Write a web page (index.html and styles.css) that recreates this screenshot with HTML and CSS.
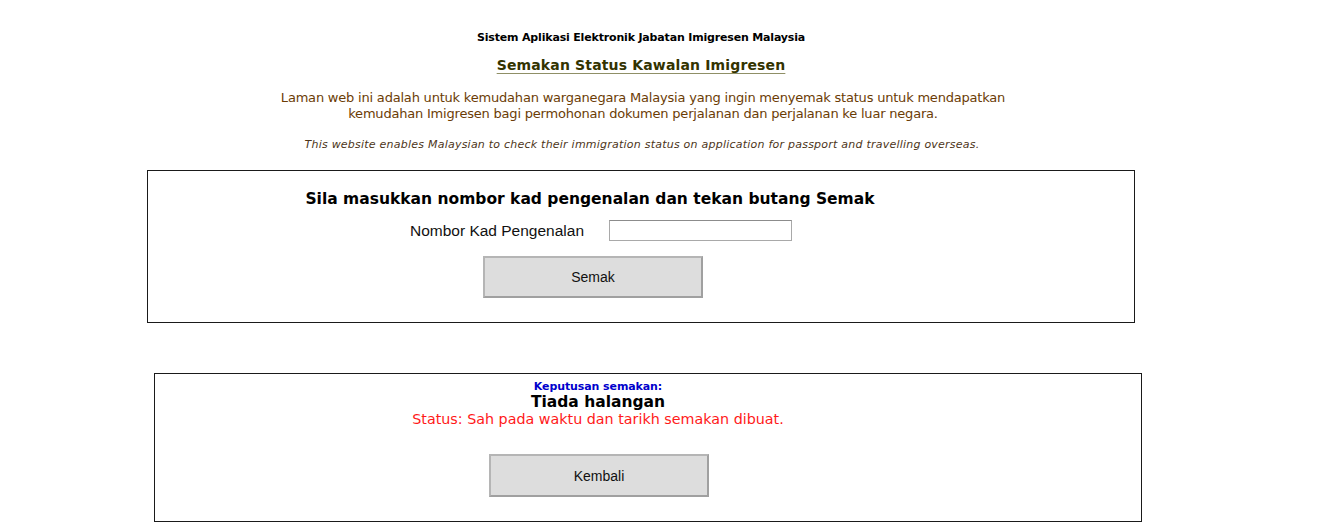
FILE: index.html
```html
<!DOCTYPE html>
<html lang="ms">
<head>
<meta charset="utf-8">
<title>Semakan Status Kawalan Imigresen</title>
<link rel="stylesheet" href="styles.css">
</head>
<body>
<div class="page">
  <div class="system-title">Sistem Aplikasi Elektronik Jabatan Imigresen Malaysia</div>
  <div class="page-title">Semakan Status Kawalan Imigresen</div>
  <p class="intro">Laman web ini adalah untuk kemudahan warganegara Malaysia yang ingin menyemak status untuk mendapatkan<br>kemudahan Imigresen bagi permohonan dokumen perjalanan dan perjalanan ke luar negara.</p>
  <p class="intro-en">This website enables Malaysian to check their immigration status on application for passport and travelling overseas.</p>

  <div class="box box-form">
    <div class="box-inner form-inner">
      <div class="form-heading">Sila masukkan nombor kad pengenalan dan tekan butang Semak</div>
      <div class="field-row">
        <label class="field-label" for="ic">Nombor Kad Pengenalan</label>
        <input class="field-input" id="ic" type="text">
      </div>
      <button class="btn btn-check" type="button">Semak</button>
    </div>
  </div>

  <div class="box box-result">
    <div class="box-inner result-inner">
      <div class="result-label">Keputusan semakan:</div>
      <div class="result-value">Tiada halangan</div>
      <div class="result-status">Status: Sah pada waktu dan tarikh semakan dibuat.</div>
      <button class="btn btn-back" type="button">Kembali</button>
    </div>
  </div>
</div>
</body>
</html>
```

FILE: styles.css
```css
html, body {
  margin: 0;
  padding: 0;
  background: #ffffff;
}

.page {
  width: 1282px;
  display: flex;
  flex-direction: column;
  align-items: center;
  font-family: "DejaVu Sans", Verdana, sans-serif;
  padding-top: 30px;
}

.system-title {
  font-size: 11px;
  font-weight: bold;
  color: #000000;
  line-height: 14px;
  letter-spacing: -0.17px;
  margin-top: 1px;
}

.page-title {
  margin-top: 12px;
  font-size: 14px;
  font-weight: bold;
  color: #333300;
  line-height: 16px;
  text-decoration: underline;
  text-decoration-color: #8f8f66;
  text-underline-offset: 3px;
  letter-spacing: 0.15px;
}

.intro {
  margin: 17px 0 0;
  font-size: 13px;
  line-height: 16px;
  color: #6b3c05;
  text-align: center;
  letter-spacing: -0.2px;
  padding-left: 4px;
}

.intro-en {
  margin: 16px 0 0;
  font-size: 11px;
  line-height: 14px;
  font-style: italic;
  color: #4d3519;
  text-align: center;
  letter-spacing: 0.23px;
  padding-left: 2px;
}

.box {
  border: 1px solid #1a1a1a;
  box-sizing: border-box;
}

.box-form {
  margin-top: 18px;
  width: 988px;
  height: 153px;
}

.box-result {
  margin-top: 50px;
  width: 988px;
  height: 149px;
  margin-left: 13px;
}

.box-inner {
  display: flex;
  flex-direction: column;
  align-items: center;
}

.form-inner {
  padding: 17px 102px 0 0;
}

.form-heading {
  font-size: 15.5px;
  font-weight: bold;
  color: #000000;
  line-height: 22px;
}

.field-row {
  display: flex;
  align-items: center;
  margin-top: 10px;
  margin-left: 22px;
}

.field-label {
  font-family: "Liberation Sans", Arial, sans-serif;
  font-size: 15.5px;
  color: #111111;
  margin-right: 25px;
}

.field-input {
  width: 183px;
  height: 21px;
  box-sizing: border-box;
  border: 1px solid #a9a9a9;
  border-top-color: #8c8c8c;
  padding: 0;
  margin: 0;
  background: #ffffff;
}

.btn {
  width: 220px;
  height: 42px;
  box-sizing: border-box;
  background: #dddddd;
  border: 2px solid #a0a0a0;
  border-top-color: #b5b5b5;
  border-left-color: #b5b5b5;
  font-family: "Liberation Sans", Arial, sans-serif;
  font-size: 14px;
  color: #111111;
  padding: 0;
}

.btn-check {
  margin-top: 15px;
  margin-left: 6px;
}

.result-inner {
  padding: 7px 99px 0 0;
}

.result-label {
  font-size: 11px;
  font-weight: bold;
  color: #0000cc;
  line-height: 12px;
  letter-spacing: -0.1px;
}

.result-value {
  font-size: 15.5px;
  font-weight: bold;
  color: #000000;
  line-height: 18px;
  margin-top: 0;
}

.result-status {
  font-size: 14.3px;
  color: #ff1a1a;
  line-height: 16px;
  margin-top: 0;
}

.btn-back {
  margin-top: 27px;
  margin-left: 2px;
  height: 43px;
}
```
